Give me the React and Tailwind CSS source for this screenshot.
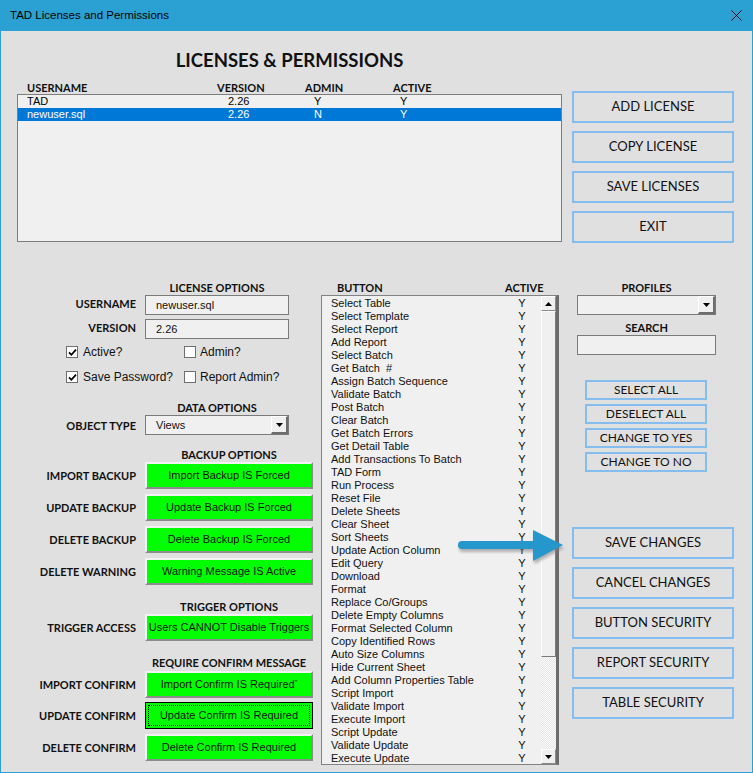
import React from 'react';

const buttonRows = [
  'Select Table', 'Select Template', 'Select Report', 'Add Report', 'Select Batch', 'Get Batch  #',
  'Assign Batch Sequence', 'Validate Batch', 'Post Batch', 'Clear Batch', 'Get Batch Errors',
  'Get Detail Table', 'Add Transactions To Batch', 'TAD Form', 'Run Process', 'Reset File',
  'Delete Sheets', 'Clear Sheet', 'Sort Sheets', 'Update Action Column', 'Edit Query', 'Download',
  'Format', 'Replace Co/Groups', 'Delete Empty Columns', 'Format Selected Column',
  'Copy Identified Rows', 'Auto Size Columns', 'Hide Current Sheet', 'Add Column Properties Table',
  'Script Import', 'Validate Import', 'Execute Import', 'Script Update', 'Validate Update', 'Execute Update',
];

const calibri = "font-['Lato',sans-serif]";
const label = `${calibri} font-bold text-[11px] leading-[13px] text-[#111]`;

const CheckBox = ({ checked }) => (
  <span className="w-[12px] h-[12px] border border-[#6f6f6f] bg-white flex items-center justify-center shrink-0">
    {checked && (
      <svg width="9" height="9" viewBox="0 0 9 9">
        <path d="M1 4.3 L3.4 6.8 L8 1.6" fill="none" stroke="#000" strokeWidth="1.7" />
      </svg>
    )}
  </span>
);

const DropButton = () => (
  <span className="w-[17px] h-full flex items-center justify-center bg-[#f0f0f0] border-l border-t border-l-white border-t-white border-r-2 border-b-2 border-r-[#6d6d6d] border-b-[#6d6d6d]">
    <svg width="7" height="4" viewBox="0 0 7 4"><path d="M0 0h7L3.5 4z" fill="#000" /></svg>
  </span>
);

const ScrollButton = ({ up }) => (
  <div className="h-[15px] flex items-center justify-center bg-[#f0f0f0] border border-t-white border-l-white border-r-[#8a8a8a] border-b-[#8a8a8a]">
    <svg width="7" height="4" viewBox="0 0 7 4">
      <path d={up ? 'M0 4h7L3.5 0z' : 'M0 0h7L3.5 4z'} fill="#000" />
    </svg>
  </div>
);

const BlueButton = ({ children, className = '' }) => (
  <div className={`border-2 border-[#86bdef] flex items-center justify-center ${calibri} text-[#111] ${className}`}>
    {children}
  </div>
);

const GreenButton = ({ children, focused }) =>
  focused ? (
    <div className="w-[168px] h-[27px] border border-black bg-[#00ff00] p-[2px]">
      <div className="h-full border border-dotted border-black flex items-center justify-center text-[11px] text-[#111]">
        {children}
      </div>
    </div>
  ) : (
    <div className="w-[168px] h-[27px] bg-[#00ff00] border-2 border-t-[#f2f2f2] border-l-[#f2f2f2] border-b-[#8c8c8c] border-r-[#8c8c8c] flex items-center justify-center text-[11px] text-[#111]">
      {children}
    </div>
  );

const FieldRow = ({ name, className = '', labelClass = '', children }) => (
  <div className={`flex items-center ${className}`}>
    <div className={`w-[135px] text-right ${label} ${labelClass}`}>{name}</div>
    <div className="ml-[9px]">{children}</div>
  </div>
);

const SectionHead = ({ children, width, className = '' }) => (
  <div className={`pl-[144px] ${className}`}>
    <div className={`${width} text-center ${label}`}>{children}</div>
  </div>
);

export default function App() {
  return (
    <div className="w-[753px] h-[773px] flex flex-col border-x border-b border-[#2ba1d3] font-['Liberation_Sans',Arial,sans-serif] overflow-hidden">
      {/* Title bar */}
      <div className="h-[31px] bg-[#2ba1d3] flex items-center justify-between pl-[9px] pr-[10px] shrink-0">
        <span className="text-[11.5px] text-black">TAD Licenses and Permissions</span>
        <svg width="11" height="11" viewBox="0 0 11 11">
          <path d="M0.5 0.5 L10.5 10.5 M10.5 0.5 L0.5 10.5" stroke="#000" strokeWidth="1" />
        </svg>
      </div>

      <div className="flex-1 bg-[#e0e0e0] relative">
        {/* Licenses list */}
        <div className="flex items-start pl-[16px]">
          <div className="w-[545px]">
            <h1 className={`mt-[18px] h-[22px] leading-[22px] text-center ${calibri} font-bold text-[18.5px] text-[#111]`}>
              LICENSES &amp; PERMISSIONS
            </h1>
            <div className={`mt-[10px] h-[13px] flex pl-[10px] ${label}`}>
              <span className="w-[190px]">USERNAME</span>
              <span className="w-[88px]">VERSION</span>
              <span className="w-[88px]">ADMIN</span>
              <span>ACTIVE</span>
            </div>
            <div className="h-[148px] border border-[#7e7e7e] bg-[#f0f0f0] text-[11px] leading-[13px]">
              <div className="h-[13px] flex pl-[9px] text-black">
                <span className="w-[201px]">TAD</span>
                <span className="w-[86px]">2.26</span>
                <span className="w-[86px]">Y</span>
                <span>Y</span>
              </div>
              <div className="h-[13px] flex pl-[9px] bg-[#0078d7] text-white">
                <span className="w-[201px]">newuser.sql</span>
                <span className="w-[86px]">2.26</span>
                <span className="w-[86px]">N</span>
                <span>Y</span>
              </div>
            </div>
          </div>
          <div className="ml-[10px] mt-[60px] flex flex-col gap-[8px]">
            {['ADD LICENSE', 'COPY LICENSE', 'SAVE LICENSES', 'EXIT'].map((t) => (
              <BlueButton key={t} className="w-[162px] h-[32px] text-[13px]">{t}</BlueButton>
            ))}
          </div>
        </div>

        {/* Lower section */}
        <div className="mt-[38px] flex items-start">
          {/* Left: options */}
          <div className="w-[320px]">
            <SectionHead width="w-[144px]">LICENSE OPTIONS</SectionHead>
            <FieldRow name="USERNAME" className="mt-[1px]" labelClass="pb-[4px]">
              <div className="w-[144px] h-[20px] border border-[#7a7a7a] bg-[#f0f0f0] pl-[10px] text-[11px] leading-[18px] text-[#111]">
                newuser.sql
              </div>
            </FieldRow>
            <FieldRow name="VERSION" className="mt-[4px]" labelClass="pb-[4px]">
              <div className="w-[144px] h-[20px] border border-[#7a7a7a] bg-[#f0f0f0] pl-[10px] text-[11px] leading-[18px] text-[#111]">
                2.26
              </div>
            </FieldRow>

            <div className="mt-[7px] h-[12px] flex items-center text-[12px] text-[#111]">
              <div className="w-[183px] pl-[65px] flex items-center gap-[5px]">
                <CheckBox checked />
                <span>Active?</span>
              </div>
              <div className="flex items-center gap-[4px]">
                <CheckBox />
                <span>Admin?</span>
              </div>
            </div>
            <div className="mt-[13px] h-[12px] flex items-center text-[12px] text-[#111]">
              <div className="w-[183px] pl-[65px] flex items-center gap-[5px]">
                <CheckBox checked />
                <span>Save Password?</span>
              </div>
              <div className="flex items-center gap-[4px]">
                <CheckBox />
                <span>Report Admin?</span>
              </div>
            </div>

            <SectionHead width="w-[144px]" className="mt-[18px]">DATA OPTIONS</SectionHead>
            <FieldRow name="OBJECT TYPE" className="mt-[1px]">
              <div className="w-[144px] h-[20px] border border-[#7a7a7a] bg-[#f0f0f0] flex text-[11px] text-[#111]">
                <span className="flex-1 pl-[10px] leading-[18px]">Views</span>
                <DropButton />
              </div>
            </FieldRow>

            <SectionHead width="w-[168px]" className="mt-[13px]">BACKUP OPTIONS</SectionHead>
            <FieldRow name="IMPORT BACKUP" className="mt-[1px]">
              <GreenButton>Import Backup IS Forced</GreenButton>
            </FieldRow>
            <FieldRow name="UPDATE BACKUP" className="mt-[5px]">
              <GreenButton>Update Backup IS Forced</GreenButton>
            </FieldRow>
            <FieldRow name="DELETE BACKUP" className="mt-[5px]">
              <GreenButton>Delete Backup IS Forced</GreenButton>
            </FieldRow>
            <FieldRow name="DELETE WARNING" className="mt-[5px]">
              <GreenButton>Warning Message IS Active</GreenButton>
            </FieldRow>

            <SectionHead width="w-[168px]" className="mt-[15px]">TRIGGER OPTIONS</SectionHead>
            <FieldRow name="TRIGGER ACCESS" className="mt-[1px]">
              <GreenButton>Users CANNOT Disable Triggers</GreenButton>
            </FieldRow>

            <SectionHead width="w-[168px]" className="mt-[15px]">REQUIRE CONFIRM MESSAGE</SectionHead>
            <FieldRow name="IMPORT CONFIRM" className="mt-[2px]">
              <GreenButton>
                Import Confirm IS Required<span className="text-[7px] self-start mt-[5px]">"</span>
              </GreenButton>
            </FieldRow>
            <FieldRow name="UPDATE CONFIRM" className="mt-[4px]">
              <GreenButton focused>Update Confirm IS Required</GreenButton>
            </FieldRow>
            <FieldRow name="DELETE CONFIRM" className="mt-[5px]">
              <GreenButton>Delete Confirm IS Required</GreenButton>
            </FieldRow>
          </div>

          {/* Middle: button permissions */}
          <div className="w-[238px]">
            <div className={`h-[13px] flex ${label}`}>
              <span className="w-[184px] pl-[16px]">BUTTON</span>
              <span>ACTIVE</span>
            </div>
            <div className="mt-[1px] h-[470px] flex border border-[#828282] border-r-[3px] border-r-[#6b6b6b] bg-[#f0f0f0]">
              <div className="flex-1 pt-[1px] overflow-hidden text-[11px] leading-[13px] text-[#111]">
                {buttonRows.map((name) => (
                  <div key={name} className="h-[13px] flex">
                    <span className="w-[185px] pl-[9px] whitespace-pre">{name}</span>
                    <span className="w-[30px] text-center">Y</span>
                  </div>
                ))}
              </div>
              <div className="w-[15px] flex flex-col">
                <ScrollButton up />
                <div className="h-[346px] bg-[#f0f0f0] border border-t-white border-l-white border-r-[#7a7a7a] border-b-[#7a7a7a]" />
                <div className="flex-1 bg-[repeating-conic-gradient(#e6e6e6_0%_25%,#fbfbfb_0%_50%)] bg-[length:2px_2px]" />
                <ScrollButton />
              </div>
            </div>
          </div>

          {/* Right: profiles and actions */}
          <div className="ml-[13px] w-[162px]">
            <div className="pl-[5px]">
              <div className={`w-[139px] text-center ${label}`}>PROFILES</div>
              <div className="mt-[1px] w-[139px] h-[20px] border border-[#7a7a7a] bg-[#f0f0f0] flex justify-end">
                <DropButton />
              </div>
              <div className={`mt-[6px] w-[139px] text-center ${label}`}>SEARCH</div>
              <div className="mt-[1px] w-[139px] h-[20px] border border-[#7a7a7a] bg-[#f0f0f0]" />
            </div>
            <div className="mt-[25px] ml-[13px] flex flex-col gap-[4px]">
              {['SELECT ALL', 'DESELECT ALL', 'CHANGE TO YES', 'CHANGE TO NO'].map((t) => (
                <BlueButton key={t} className="w-[122px] h-[20px] text-[12px]">{t}</BlueButton>
              ))}
            </div>
            <div className="mt-[55px] flex flex-col gap-[8px]">
              {['SAVE CHANGES', 'CANCEL CHANGES', 'BUTTON SECURITY', 'REPORT SECURITY', 'TABLE SECURITY'].map((t) => (
                <BlueButton key={t} className="w-[162px] h-[32px] text-[13px]">{t}</BlueButton>
              ))}
            </div>
          </div>
        </div>

        {/* Callout arrow */}
        <svg className="absolute left-[454px] top-[497px]" width="115" height="40" viewBox="0 0 115 40">
          <defs>
            <filter id="sh" x="-20%" y="-50%" width="140%" height="200%">
              <feGaussianBlur stdDeviation="1.5" />
            </filter>
          </defs>
          <g fill="#7a7a7a" stroke="#7a7a7a" opacity="0.55" filter="url(#sh)" transform="translate(1 3)">
            <line x1="7" y1="17" x2="82" y2="17" strokeWidth="8" strokeLinecap="round" />
            <path d="M78 2 L78 33 L108 17 Z" stroke="none" />
          </g>
          <g fill="#2597cc" stroke="#2597cc">
            <line x1="7" y1="17" x2="82" y2="17" strokeWidth="8" strokeLinecap="round" />
            <path d="M78 2 L78 33 L108 17 Z" stroke="none" />
          </g>
        </svg>
      </div>
    </div>
  );
}
